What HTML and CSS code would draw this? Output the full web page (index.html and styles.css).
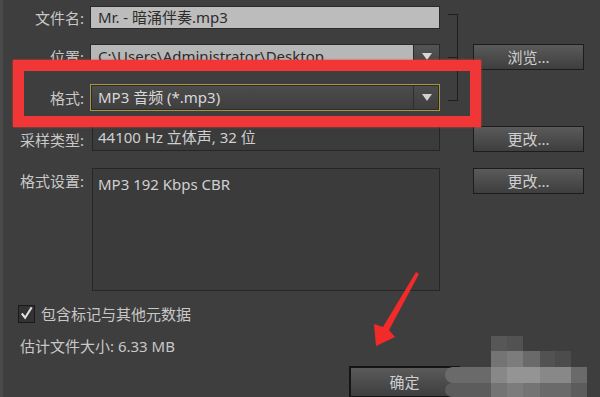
FILE: index.html
```html
<!DOCTYPE html>
<html lang="zh-CN">
<head>
    <meta charset="UTF-8">
    <meta name="viewport" content="width=device-width, initial-scale=1.0">
    <title>导出音频</title>
    <link rel="stylesheet" href="styles.css">
</head>
<body>
    <div class="dialog">
        <div class="form">
            <label class="label">文件名:</label>
            <div class="field light">Mr. - 暗涌伴奏.mp3</div>
            <div class="bracket"></div>

            <label class="label">位置:</label>
            <div class="combo light-combo">
                <span class="combo-text">C:\Users\Administrator\Desktop</span>
                <span class="combo-btn">
                    <svg width="10" height="7" viewBox="0 0 10 7"><path d="M0 0H10L5 7Z" fill="#d8d8d8"/></svg>
                </span>
            </div>
            <button class="btn">浏览...</button>

            <label class="label">格式:</label>
            <div class="combo format-combo">
                <span class="combo-text">MP3 音频 (*.mp3)</span>
                <span class="combo-btn">
                    <svg width="10" height="7" viewBox="0 0 10 7"><path d="M0 0H10L5 7Z" fill="#d0d0d0"/></svg>
                </span>
            </div>

            <label class="label">采样类型:</label>
            <div class="field dark">44100 Hz 立体声, 32 位</div>
            <button class="btn">更改...</button>

            <label class="label label-top">格式设置:</label>
            <div class="field dark area">MP3 192 Kbps CBR</div>
            <button class="btn">更改...</button>
        </div>

        <label class="check">
            <span class="check-box">
                <svg width="16" height="17" viewBox="0 0 16 17"><path d="M3 8.5L6.5 13L13.5 2" fill="none" stroke="#e0e0e0" stroke-width="2.2"/></svg>
            </span>
            包含标记与其他元数据
        </label>
        <div class="size">估计文件大小: 6.33 MB</div>

        <div class="footer">
            <button class="btn ok">确定</button>
        </div>
    </div>

    <!-- annotations over the screenshot -->
    <div class="highlight"></div>
    <svg class="arrow" width="600" height="397" viewBox="0 0 600 397">
        <path d="M416 272L419 274L389 330L395 337L376 346L374 324L383 327Z" fill="#f22a2a"/>
    </svg>
    <div class="mosaic">
        <span></span><span class="s3"></span><span class="s2"></span><span></span><span></span><span></span><span></span>
        <span></span><span class="s6"></span><span class="s7"></span><span class="s5"></span><span class="s2"></span><span class="s1"></span><span></span>
        <span class="s5 round"></span><span class="s8"></span><span class="s9"></span><span class="s9"></span><span class="s8"></span><span class="s8"></span><span class="s5"></span>
        <span class="s4 round"></span><span class="s6"></span><span class="s7"></span><span class="s6"></span><span class="s5"></span><span class="s5"></span><span class="s4"></span>
    </div>
</body>
</html>
```

FILE: styles.css
```css
html, body {
    height: 100%;
}
body {
    margin: 0;
    background-color: #3e3e3e;
    box-shadow: inset 3px 0 #4a4a4a;
    font-family: "Noto Sans", "Noto Sans CJK SC", sans-serif;
    font-size: 15px;
    color: #c8c8c8;
    overflow: hidden;
}
.dialog {
    padding-top: 6px;
}
.form {
    display: grid;
    grid-template-columns: 90px 350px 33px 111px;
    grid-template-rows: 23px 25px 27px 27px 123px;
    row-gap: 15px;
}
.label {
    grid-column: 1;
    align-self: center;
    padding-right: 6px;
    text-align: right;
    line-height: 20px;
}
.label-top {
    align-self: start;
    margin-top: 3px;
}
.field {
    grid-column: 2;
    box-sizing: border-box;
    padding: 0 7px;
    line-height: 21px;
    white-space: nowrap;
    overflow: hidden;
}
.light {
    background-color: #bcbcbc;
    border: 1px solid #2a2a2a;
    color: #2c2c2c;
}
.dark {
    align-self: start;
    height: 25px;
    margin-left: 2px;
    padding: 0 5px;
    background-color: #3b3b3b;
    border: 1px solid #262626;
    color: #d0d0d0;
}
.area {
    height: 123px;
    padding-top: 5px;
}
.combo {
    grid-column: 2;
    display: flex;
    box-sizing: border-box;
    align-self: start;
}
.combo-text {
    flex: 1;
    padding: 0 7px;
    white-space: nowrap;
    overflow: hidden;
}
.combo-btn {
    width: 25px;
    display: flex;
    align-items: center;
    justify-content: center;
}
.light-combo {
    height: 24px;
    border: 1px solid #2a2a2a;
}
.light-combo .combo-text {
    background-color: #b7b7b7;
    color: #2a2a2a;
    line-height: 22px;
}
.light-combo .combo-btn {
    background: linear-gradient(#545454, #444);
    border-left: 1px solid #2a2a2a;
}
.format-combo {
    height: 27px;
    border: 1px solid #a99540;
    background: linear-gradient(#4c4c4c, #3f3f3f);
    box-shadow: inset 0 0 0 1px #2c2c2c;
    color: #d8d8d8;
}
.format-combo .combo-text {
    line-height: 25px;
}
.format-combo .combo-btn {
    border-left: 1px solid #2e2e2e;
}
.bracket {
    grid-column: 3;
    grid-row: 1 / 4;
    align-self: start;
    position: relative;
    width: 9px;
    height: 85px;
    margin: 8px 0 0 8px;
    border: 1px solid #1e1e1e;
    border-left: none;
}
.bracket::after {
    content: "";
    position: absolute;
    left: 0;
    top: 42px;
    width: 9px;
    border-top: 1px solid #1e1e1e;
}
.btn {
    grid-column: 4;
    align-self: start;
    height: 26px;
    padding: 0;
    border: 1px solid #1c1c1c;
    background: linear-gradient(#5a5a5a, #3e3e3e);
    color: #cfcfcf;
    font-family: inherit;
    font-size: 15px;
    line-height: 22px;
}
.check {
    display: flex;
    align-items: center;
    gap: 6px;
    margin: 14px 0 0 18px;
    height: 17px;
}
.check-box {
    width: 15px;
    height: 16px;
    border: 1px solid #1a1a1a;
    background-color: #333;
    display: flex;
}
.check-box svg {
    margin: -1px 0 0 0;
}
.size {
    margin: 14px 0 0 20px;
    line-height: 20px;
}
.footer {
    margin: 10px 0 0 349px;
}
.ok {
    width: 111px;
    height: 32px;
    border: 2px solid #141414;
}
.highlight {
    position: absolute;
    left: 13px;
    top: 60px;
    width: 446px;
    height: 45px;
    border: 11px solid #f03636;
    box-shadow: 0 0 2px #f03636;
}
.arrow {
    position: absolute;
    left: 0;
    top: 0;
}
.mosaic {
    position: absolute;
    left: 445px;
    top: 336px;
    display: grid;
    grid-template-columns: 46px 16px 16px 17px 15px 16px 16px;
    grid-template-rows: 15px 16px 16px 14px;
}
.round { border-radius: 12px 0 0 12px; }
.s1 { background-color: #4c4c4c; }
.s2 { background-color: #525252; }
.s3 { background-color: #575757; }
.s4 { background-color: #5c5c5c; }
.s5 { background-color: #6a6a6a; }
.s6 { background-color: #747474; }
.s7 { background-color: #7c7c7c; }
.s8 { background-color: #888; }
.s9 { background-color: #949494; }
```
